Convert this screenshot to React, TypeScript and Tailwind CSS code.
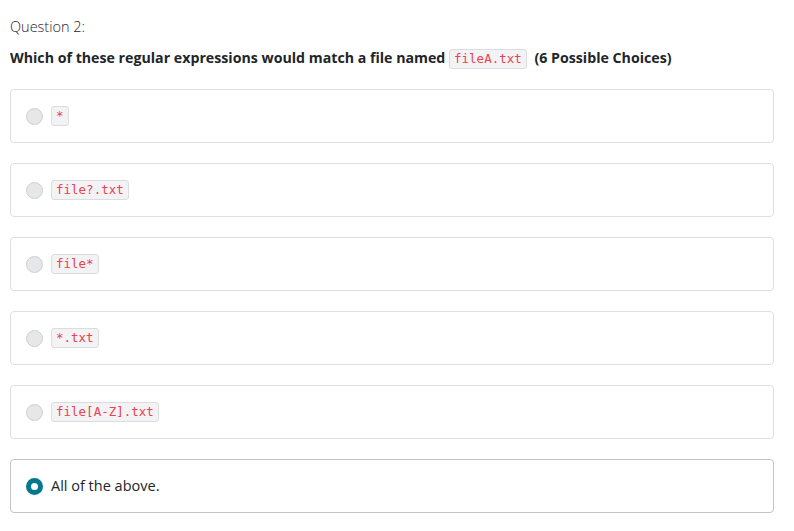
import React, { useState } from 'react';

function Code({ children }: { children: React.ReactNode }) {
  return (
    <code className="inline-block rounded-[3px] border border-[#dcdcdc] bg-[#f3f3f5] px-[4px] py-[1px] font-['DejaVu_Sans_Mono',monospace] text-[12.5px] font-normal leading-[16px] text-[#e8434f]">
      {children}
    </code>
  );
}

function Radio({ checked }: { checked: boolean }) {
  if (checked) {
    return <span className="block h-[17px] w-[17px] shrink-0 rounded-full border-[5px] border-[#05788f] bg-white" />;
  }
  return <span className="block h-[17px] w-[17px] shrink-0 rounded-full border border-[#cfcfcf] bg-[#e6e7e9]" />;
}

export default function App() {
  const [selected, setSelected] = useState(5);
  const choices: React.ReactNode[] = [
    <Code>*</Code>,
    <Code>file?.txt</Code>,
    <Code>file*</Code>,
    <Code>*.txt</Code>,
    <Code>file[A-Z].txt</Code>,
    <span>All of the above.</span>,
  ];

  return (
    <div className="min-h-[531px] w-[794px] bg-white px-[10px] pt-[17px] font-['Open_Sans',sans-serif] text-[#212529]">
      <p className="text-[14.5px] font-light leading-[20px] text-[#1f2328]">Question 2:</p>
      <p className="mt-[11px] text-[14.2px] font-bold leading-[20px] text-[#212529]">
        Which of these regular expressions would match a file named <Code>fileA.txt</Code>{' '}
        <span className="ml-[4px]">(6 Possible Choices)</span>
      </p>
      <div className="mt-[20px] flex w-[764px] flex-col gap-[20px]">
        {choices.map((c, i) => (
          <button
            key={i}
            onClick={() => setSelected(i)}
            className={`flex h-[54px] items-center gap-[8px] rounded-[4px] border bg-white pl-[15px] text-left text-[14.5px] text-[#212529] ${
              selected === i ? 'border-[#c4c4c4]' : 'border-[#e0e0e0]'
            }`}
          >
            <Radio checked={selected === i} />
            {c}
          </button>
        ))}
      </div>
    </div>
  );
}
